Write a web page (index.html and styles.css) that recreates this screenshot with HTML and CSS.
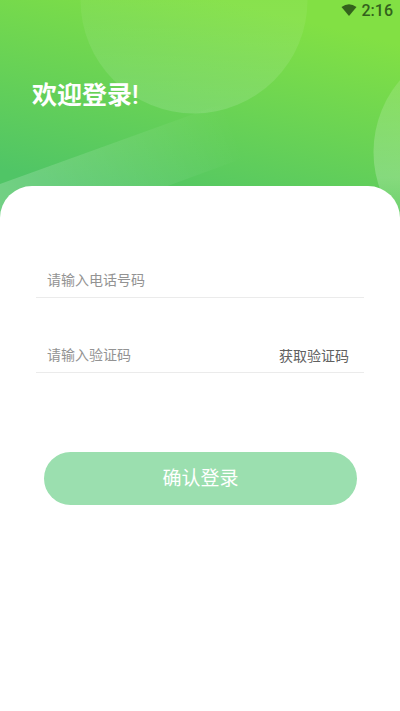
FILE: index.html
```html
<!DOCTYPE html>
<html lang="zh-CN">
<head>
<meta charset="utf-8">
<meta name="viewport" content="width=device-width, initial-scale=1">
<title>欢迎登录</title>
<link rel="stylesheet" href="styles.css">
</head>
<body>
<header class="hero">
  <svg class="hero-art" viewBox="0 0 400 220" preserveAspectRatio="xMidYMin slice" aria-hidden="true">
    <defs>
      <linearGradient id="disc" x1="0" y1="0" x2="0" y2="1">
        <stop offset="0.5" stop-color="#fff" stop-opacity="0.05"/>
        <stop offset="1" stop-color="#fff" stop-opacity="0.13"/>
      </linearGradient>
      <linearGradient id="side" gradientUnits="userSpaceOnUse" x1="0" y1="80" x2="0" y2="210">
        <stop offset="0" stop-color="#fff" stop-opacity="0.12"/>
        <stop offset="0.75" stop-color="#fff" stop-opacity="0.22"/>
        <stop offset="1" stop-color="#fff" stop-opacity="0.12"/>
      </linearGradient>
      <linearGradient id="beam" gradientUnits="userSpaceOnUse" x1="0" y1="215" x2="235" y2="130">
        <stop offset="0" stop-color="#fff" stop-opacity="0.2"/>
        <stop offset="1" stop-color="#fff" stop-opacity="0"/>
      </linearGradient>
    </defs>
    <circle cx="194" cy="0" r="113.5" fill="url(#disc)"/>
    <circle cx="484" cy="152" r="110.5" fill="url(#side)"/>
    <path d="M0 184L260 90V152L75 220H0Z" fill="url(#beam)"/>
  </svg>
  <div class="status">
    <svg class="wifi" viewBox="0 0 16 12" aria-hidden="true"><path d="M0.500 3Q8-2.400 15.500 3L8 12Z" fill="#33621c"/></svg>
    <time>2:16</time>
  </div>
  <h1 class="title">欢迎登录<span class="mark">!</span></h1>
</header>
<main class="sheet">
  <form class="form">
    <div class="field">
      <input class="input" type="tel" placeholder="请输入电话号码" aria-label="电话号码">
    </div>
    <div class="field">
      <input class="input" type="text" placeholder="请输入验证码" aria-label="验证码">
      <button class="code" type="button">获取验证码</button>
    </div>
    <button class="submit" type="submit">确认登录</button>
  </form>
</main>
</body>
</html>
```
FILE: styles.css
```css
* {
  box-sizing: border-box;
}

body {
  margin: 0;
  background: #fff;
  font-family: Roboto, "Noto Sans CJK SC", sans-serif;
}

button,
input {
  font: inherit;
  border: 0;
  padding: 0;
  background: none;
}

.hero {
  position: relative;
  overflow: hidden;
  padding-bottom: 106px;
  background: linear-gradient(14deg, #50c566 16%, #82e044 86%);
}

.hero-art {
  position: absolute;
  inset: 0;
  width: 100%;
  height: 100%;
}

.status {
  position: relative;
  display: flex;
  justify-content: flex-end;
  align-items: center;
  gap: 5px;
  height: 22px;
  padding-right: 7px;
  color: #33621c;
  font-size: 16px;
  font-weight: 500;
  line-height: 22px;
}

.wifi {
  width: 16px;
  height: 12px;
  margin-bottom: 3px;
}

.title {
  position: relative;
  margin: 56px 32px 0;
  color: #fff;
  font-size: 25px;
  font-weight: 700;
  line-height: 36px;
}

.mark {
  font-weight: 500;
}

.sheet {
  position: relative;
  margin-top: -34px;
  padding: 76px 36px 32px;
  border-radius: 32px 32px 0 0;
  background: #fff;
}

.form {
  display: flex;
  flex-direction: column;
}

.field {
  display: flex;
  align-items: center;
  height: 36px;
  margin-bottom: 39px;
  padding: 0 15px 0 11px;
  border-bottom: 1px solid #ebebeb;
  font-size: 14px;
}

.input {
  flex: 1;
  min-width: 0;
  height: 100%;
  color: #333;
  outline: none;
}

.input::placeholder {
  color: #939393;
  opacity: 1;
}

.code {
  height: 100%;
  color: #606060;
}

.submit {
  height: 53px;
  margin: 40px 7px 0 8px;
  padding-bottom: 4px;
  border-radius: 27px;
  background: #9bdfaf;
  color: #fff;
  font-size: 19px;
}
```
